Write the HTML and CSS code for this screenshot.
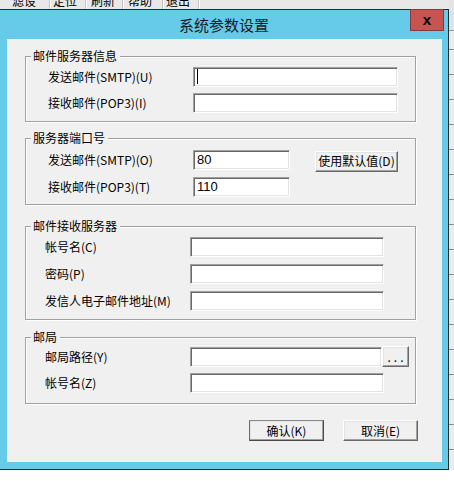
FILE: index.html
```html
<!DOCTYPE html>
<html lang="zh-CN">
<head>
  <meta charset="UTF-8">
  <meta name="viewport" content="width=device-width, initial-scale=1.0">
  <title>系统参数设置</title>
  <link rel="stylesheet" href="styles.css">
</head>
<body>
  <div class="screen">
    <div class="main">
      <div class="menubar">
        <span class="menu-item menu-first">滤设</span>
        <span class="menu-item menu-short">定位</span>
        <span class="menu-item">刷新</span>
        <span class="menu-item menu-long">帮助</span>
        <span class="menu-item menu-short">退出</span>
      </div>

      <div class="dialog">
        <div class="titlebar">
          <span class="title">系统参数设置</span>
          <button class="close" type="button">x</button>
        </div>

        <div class="client">
          <div class="group group-mail">
            <span class="legend">邮件服务器信息</span>
            <div class="row">
              <label class="label">发送邮件(SMTP)(U)</label>
              <span class="field field-wide"><span class="caret"></span></span>
            </div>
            <div class="row">
              <label class="label">接收邮件(POP3)(I)</label>
              <span class="field field-wide"></span>
            </div>
          </div>

          <div class="group group-port">
            <span class="legend">服务器端口号</span>
            <div class="row">
              <label class="label">发送邮件(SMTP)(O)</label>
              <span class="field field-port">80</span>
              <button class="btn btn-default-value" type="button">使用默认值(D)</button>
            </div>
            <div class="row">
              <label class="label">接收邮件(POP3)(T)</label>
              <span class="field field-port">110</span>
            </div>
          </div>

          <div class="group group-recv">
            <span class="legend">邮件接收服务器</span>
            <div class="row">
              <label class="label">帐号名(C)</label>
              <span class="field field-mid"></span>
            </div>
            <div class="row">
              <label class="label">密码(P)</label>
              <span class="field field-mid"></span>
            </div>
            <div class="row">
              <label class="label">发信人电子邮件地址(M)</label>
              <span class="field field-mid"></span>
            </div>
          </div>

          <div class="group group-post">
            <span class="legend">邮局</span>
            <div class="row">
              <label class="label">邮局路径(Y)</label>
              <span class="field field-path"></span>
              <button class="btn btn-browse" type="button">...</button>
            </div>
            <div class="row">
              <label class="label">帐号名(Z)</label>
              <span class="field field-mid"></span>
            </div>
          </div>

          <div class="actions">
            <button class="btn btn-action btn-ok" type="button">确认(K)</button>
            <button class="btn btn-action" type="button">取消(E)</button>
          </div>
        </div>
      </div>
    </div>
    <div class="side"></div>
  </div>
</body>
</html>
```

FILE: styles.css
```css
* {
  box-sizing: border-box;
}
body {
  margin: 0;
  background-color: #ffffff;
  font-family: "Noto Sans CJK SC", "Liberation Sans", sans-serif;
  font-size: 12px;
  color: #000000;
}
.screen {
  display: flex;
  width: 454px;
  height: 481px;
  overflow: hidden;
}
.main {
  width: 449px;
  flex-shrink: 0;
}
.side {
  flex: 1;
  height: 470px;
  background-color: #e9eced;
  background-image: linear-gradient(#e4e4e4 0, #e4e4e4 9px, #d6e6ee 9px, #d6e6ee 30px, #9a9a9a 30px, #9a9a9a 31px, transparent 31px),
    repeating-linear-gradient(#e9eced 0, #e9eced 24px, #8c8c8c 24px, #8c8c8c 25px);
}

/* window behind the dialog */
.menubar {
  display: flex;
  height: 9px;
  overflow: hidden;
  background-color: #e8e8e8;
}
.menu-item {
  width: 37px;
  padding-left: 5px;
  font-size: 12px;
  line-height: 12px;
  margin-top: -5px;
  border-right: 1px solid #c4c4c4;
  box-shadow: 1px 0 0 #ffffff;
  white-space: nowrap;
}
.menu-first {
  width: 50px;
  padding-left: 12px;
}
.menu-short {
  width: 36px;
  padding-left: 3px;
}
.menu-long {
  width: 40px;
}

/* dialog frame */
.dialog {
  background-color: #65cbe9;
  border-top: 1px solid #2b2b2b;
  border-right: 1px solid #2b2b2b;
  border-bottom: 1px solid #2b2b2b;
  padding-bottom: 7px;
}
.titlebar {
  position: relative;
  height: 29px;
  line-height: 29px;
  text-align: center;
}
.title {
  font-size: 15px;
  color: #1a1a1a;
}
.close {
  position: absolute;
  top: -1px;
  right: 4px;
  width: 34px;
  height: 22px;
  padding: 0;
  background-color: #c75450;
  border: 1px solid #853b37;
  font-family: "Liberation Sans", sans-serif;
  font-size: 15px;
  font-weight: 700;
  line-height: 16px;
  color: #000000;
}
.client {
  height: 423px;
  margin: 0 6px 0 7px;
  background-color: #f0f0f0;
  padding-top: 1px;
}

/* group boxes */
.group {
  position: relative;
  width: 391px;
  margin-left: 18px;
  border: 1px solid #a0a0a0;
  box-shadow: 1px 1px 0 #ffffff, inset 1px 1px 0 #ffffff;
  display: flex;
  flex-direction: column;
}
.legend {
  position: absolute;
  top: -8px;
  left: 5px;
  padding: 0 3px 0 2px;
  background-color: #f0f0f0;
  line-height: 14px;
}
.group-mail {
  margin-top: 16px;
  padding: 10px 0 8px 22px;
  gap: 6px;
}
.group-port {
  margin-top: 16px;
  padding: 11px 0 7px 22px;
  gap: 7px;
}
.group-recv {
  margin-top: 21px;
  padding: 10px 0 8px 19px;
  gap: 7px;
}
.group-post {
  margin-top: 17px;
  padding: 9px 0 10px 19px;
  gap: 6px;
}
.row {
  display: flex;
  align-items: center;
  height: 20px;
}
.label {
  width: 145px;
  flex-shrink: 0;
  white-space: nowrap;
  margin-top: -2px;
}

/* sunken edit boxes */
.field {
  display: block;
  height: 20px;
  padding: 0 3px;
  line-height: 18px;
  background-color: #ffffff;
  border: 1px solid;
  border-color: #a0a0a0 #ffffff #ffffff #a0a0a0;
  box-shadow: inset 1px 1px 0 #696969, inset -1px -1px 0 #e3e3e3;
  font-family: "Liberation Sans", sans-serif;
  font-size: 13px;
}
.field-wide {
  width: 205px;
}
.field-port {
  width: 97px;
}
.field-mid {
  width: 194px;
}
.field-path {
  width: 192px;
}
.caret {
  display: inline-block;
  width: 1px;
  height: 15px;
  margin-top: 1px;
  background-color: #000000;
  vertical-align: top;
}

/* raised push buttons */
.btn {
  height: 21px;
  padding: 0;
  background-color: #f0f0f0;
  border: 1px solid;
  border-color: #ffffff #696969 #696969 #ffffff;
  box-shadow: inset -1px -1px 0 #a0a0a0, inset 1px 1px 0 #e3e3e3;
  font-family: "Noto Sans CJK SC", sans-serif;
  font-size: 12px;
  line-height: 18px;
  color: #000000;
  white-space: nowrap;
}
.btn-default-value {
  width: 83px;
  margin: 2px 0 0 25px;
}
.btn-browse {
  width: 27px;
  margin-top: -1px;
  margin-bottom: 0;
  letter-spacing: 3px;
  padding-left: 3px;
  line-height: 12px;
}
.actions {
  display: flex;
  justify-content: flex-end;
  gap: 19px;
  margin-top: 16px;
  padding-right: 24px;
}
.btn-action {
  width: 75px;
}
.btn-ok {
  border-color: #8a8a8a #4a4a4a #4a4a4a #6a6a6a;
}
```
